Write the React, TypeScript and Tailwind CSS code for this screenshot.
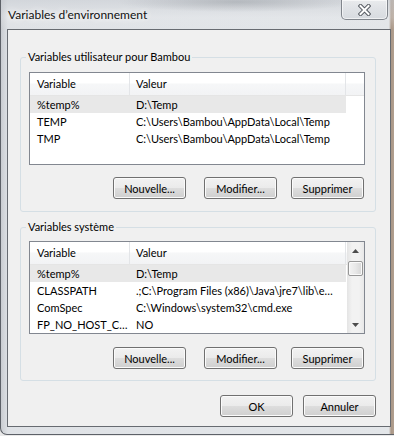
import React from "react";

type Row = { name: string; value: string; selected?: boolean };

const userRows: Row[] = [
  { name: "%temp%", value: "D:\\Temp", selected: true },
  { name: "TEMP", value: "C:\\Users\\Bambou\\AppData\\Local\\Temp" },
  { name: "TMP", value: "C:\\Users\\Bambou\\AppData\\Local\\Temp" },
];

const sysRows: Row[] = [
  { name: "%temp%", value: "D:\\Temp", selected: true },
  { name: "CLASSPATH", value: ".;C:\\Program Files (x86)\\Java\\jre7\\lib\\e\u2026" },
  { name: "ComSpec", value: "C:\\Windows\\system32\\cmd.exe" },
  { name: "FP_NO_HOST_C\u2026", value: "NO" },
];

function Btn({ label, className = "" }: { label: string; className?: string }) {
  return (
    <div
      className={
        "w-[73px] h-[22px] rounded-[3px] border border-[#707070] shadow-[inset_0_0_0_1px_#fbfbfb] bg-[linear-gradient(180deg,#f2f2f2_0%,#ebebeb_48%,#dddddd_52%,#cfcfcf_100%)] flex items-center justify-center text-[11px] leading-none text-black " +
        className
      }
    >
      {label}
    </div>
  );
}

function Header({ withRest }: { withRest: boolean }) {
  return (
    <div className="flex h-[23px] border-b border-[#e5e5e5] bg-[linear-gradient(180deg,#ffffff_0%,#ffffff_45%,#f6f7f8_50%,#f2f3f5_100%)] text-[11px] text-black">
      <div className="w-[100px] border-r border-[#e3e5e8] pl-[7px] flex items-center">Variable</div>
      <div className="w-[216px] border-r border-[#e3e5e8] pl-[6px] flex items-center">Valeur</div>
      {withRest && <div className="flex-1" />}
    </div>
  );
}

function Rows({ rows }: { rows: Row[] }) {
  return (
    <div className="flex flex-col text-[11px] text-black">
      {rows.map((r, i) => (
        <div key={i} className="flex h-[17px] leading-[17px]">
          <div className={"flex w-[316px] " + (r.selected ? "bg-[#e8e8e8]" : "")}>
            <div className="w-[100px] pl-[7px] whitespace-nowrap overflow-hidden">{r.name}</div>
            <div className="w-[216px] pl-[6px] whitespace-nowrap overflow-hidden">{r.value}</div>
          </div>
        </div>
      ))}
    </div>
  );
}

function ScrollBar() {
  return (
    <div className="w-[17px] flex flex-col bg-[linear-gradient(90deg,#e4e4e4_0%,#f2f2f2_30%,#f2f2f2_70%,#e8e8e8_100%)]">
      <div className="h-[17px] flex items-center justify-center">
        <svg width="7" height="4" viewBox="0 0 7 4">
          <path d="M0 4 L3.5 0 L7 4 Z" fill="#4d4d4d" />
        </svg>
      </div>
      <div className="mx-[1px] mt-[2px] h-[15px] rounded-[2px] border border-[#979797] bg-[linear-gradient(90deg,#f3f3f3_0%,#e8e8e8_50%,#d6d6d6_100%)] shadow-[inset_0_0_0_1px_#fafafa]" />
      <div className="flex-1" />
      <div className="h-[17px] flex items-center justify-center">
        <svg width="7" height="4" viewBox="0 0 7 4">
          <path d="M0 0 L7 0 L3.5 4 Z" fill="#4d4d4d" />
        </svg>
      </div>
    </div>
  );
}

function Group({
  title,
  children,
  className = "",
}: {
  title: string;
  children: React.ReactNode;
  className?: string;
}) {
  return (
    <div
      className={
        "ml-[12px] w-[356px] border border-[#d5dfe5] rounded-[3px] flex flex-col pl-[8px] pr-[10px] " +
        className
      }
    >
      <div className="-mt-[8px] -ml-[3px] px-[2px] w-fit bg-[#f0f0f0] text-[11px] leading-[14px] text-black">
        {title}
      </div>
      {children}
    </div>
  );
}

function ButtonRow() {
  return (
    <div className="flex justify-end pr-[1px]">
      <Btn label="Nouvelle..." />
      <Btn label="Modifier..." className="ml-[18px]" />
      <Btn label="Supprimer" className="ml-[14px]" />
    </div>
  );
}

export default function App() {
  return (
    <div className="w-[394px] h-[436px] overflow-hidden bg-[#e9e9e9] [font-family:Lato,sans-serif]">
      <div className="h-[435px] w-[394px] border-l border-b border-[#5d6168] rounded-bl-[7px] bg-[linear-gradient(90deg,#c9ccd1_0px,#dfe2e6_7px,#e3e6e9_388px,#a99686_390px,#b2a090_393px)] flex flex-col">
        {/* Title bar */}
        <div className="h-[29px] flex items-start bg-[radial-gradient(ellipse_120px_10px_at_60%_2px,rgba(120,125,132,0.35),rgba(0,0,0,0)),linear-gradient(180deg,rgba(200,204,210,0.55)_0%,rgba(230,232,235,0.3)_60%,rgba(0,0,0,0)_100%)]">
          <div className="h-[29px] flex items-center pl-[7px] text-[12px] text-[#111] [text-shadow:0_0_6px_#ffffff,0_0_10px_#ffffff]">
            Variables d&#8217;environnement
          </div>
          <div className="flex-1" />
          <div className="mr-[6px] w-[47px] h-[20px] rounded-b-[5px] border border-t-0 border-[#80858c] shadow-[inset_0_0_0_1px_rgba(255,255,255,0.6)] bg-[linear-gradient(180deg,rgba(255,255,255,0.5)_0%,rgba(225,228,232,0.4)_50%,rgba(200,205,212,0.5)_100%)] flex items-center justify-center">
            <svg width="13" height="12" viewBox="0 0 13 12">
              <path d="M2.5 2 L10.5 10 M10.5 2 L2.5 10" stroke="#555a61" strokeWidth="4" strokeLinecap="square" />
              <path d="M2.5 2 L10.5 10 M10.5 2 L2.5 10" stroke="#ffffff" strokeWidth="2" strokeLinecap="square" />
            </svg>
          </div>
        </div>

        {/* Client area */}
        <div className="ml-[6px] mr-[3px] h-[398px] border border-[#676b71] bg-[#f0f0f0] flex flex-col">
          <Group title="Variables utilisateur pour Bambou" className="mt-[27px]">
            <div className="mt-[8px] h-[93px] border border-[#828790] bg-white flex flex-col">
              <Header withRest />
              <Rows rows={userRows} />
            </div>
            <div className="mt-[12px] mb-[12px]">
              <ButtonRow />
            </div>
          </Group>

          <Group title="Variables système" className="mt-[15px]">
            <div className="mt-[7px] h-[93px] border border-[#828790] bg-white flex">
              <div className="flex-1 flex flex-col overflow-hidden">
                <Header withRest={false} />
                <Rows rows={sysRows} />
              </div>
              <ScrollBar />
            </div>
            <div className="mt-[13px] mb-[11px]">
              <ButtonRow />
            </div>
          </Group>

          <div className="mt-[14px] flex justify-end pr-[14px]">
            <Btn label="OK" />
            <Btn label="Annuler" className="ml-[10px]" />
          </div>
        </div>
      </div>
    </div>
  );
}
